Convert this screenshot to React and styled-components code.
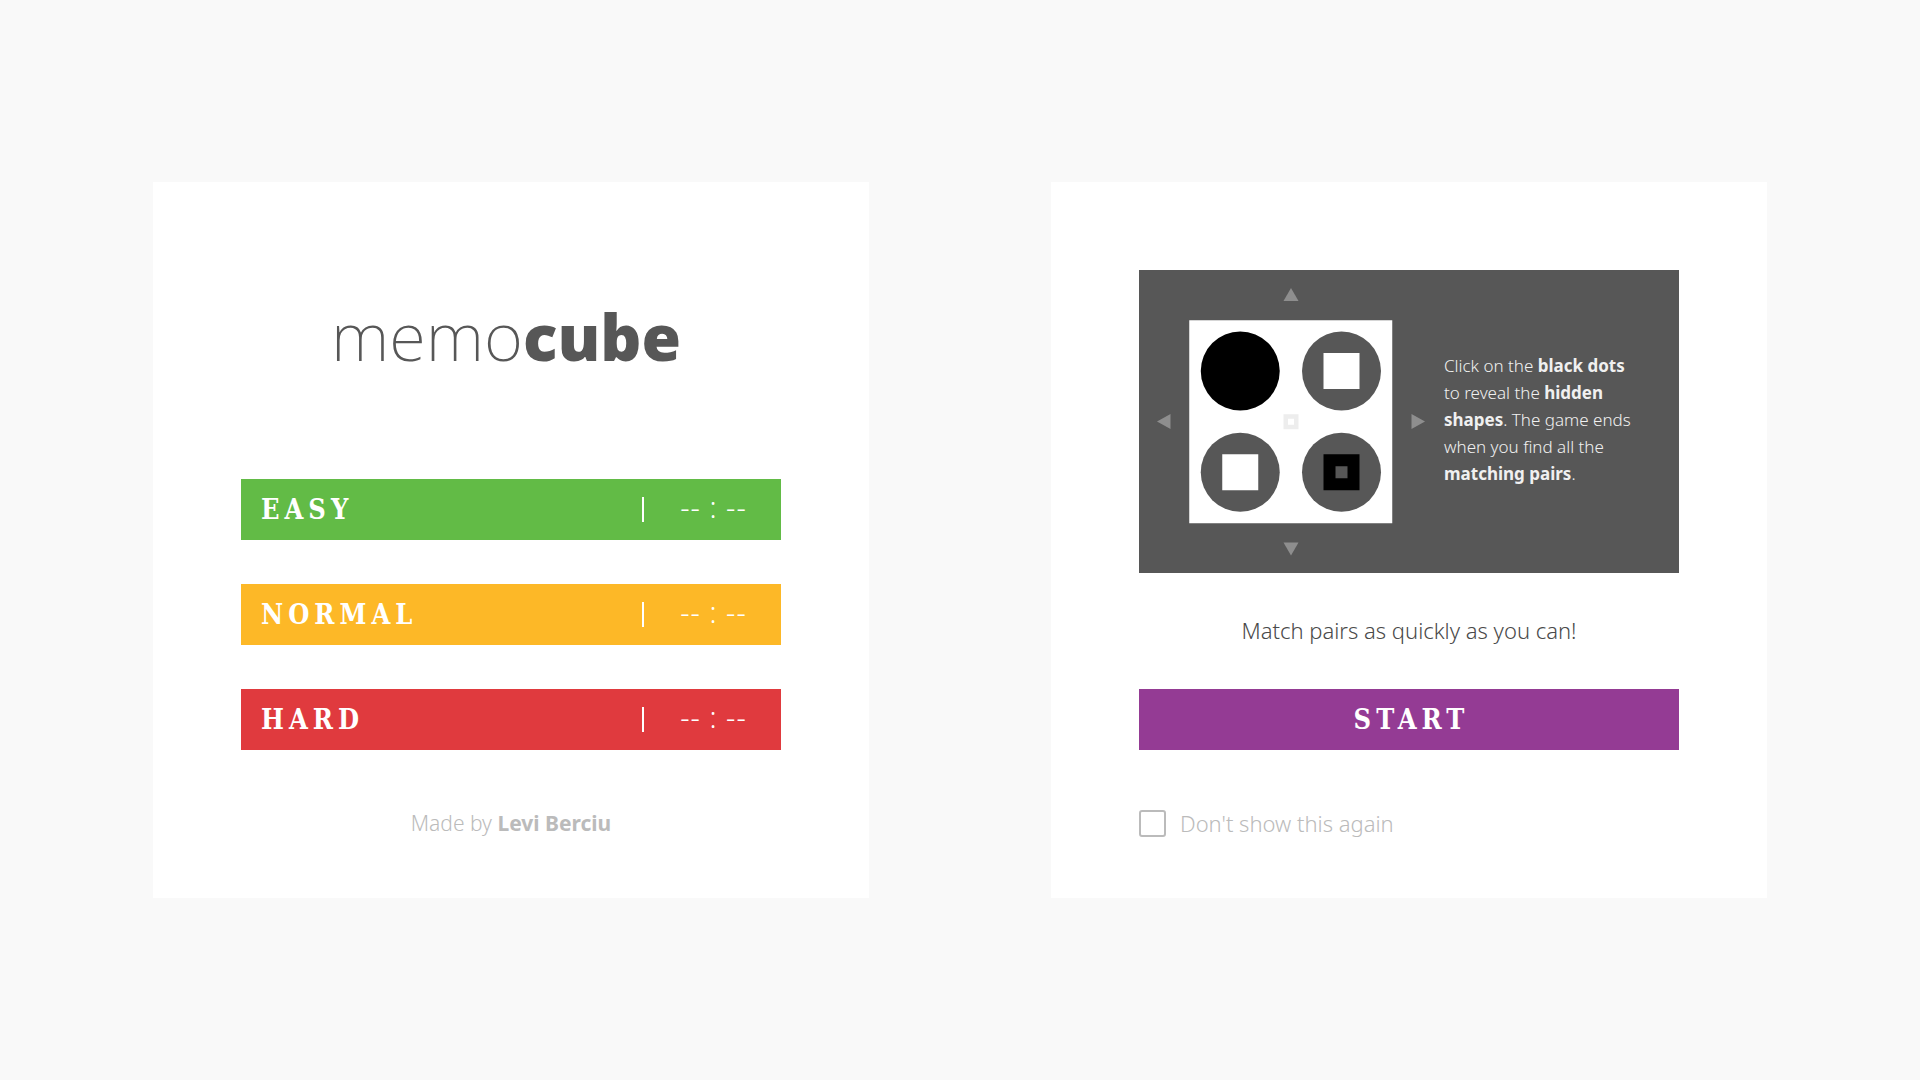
import React from 'react';
import styled, { createGlobalStyle } from 'styled-components';

const sans = '"Noto Sans", "Open Sans", sans-serif';
const slab = '"DejaVu Serif Condensed", "DejaVu Serif", serif';

const GlobalStyle = createGlobalStyle`
  *, *::before, *::after { box-sizing: border-box; }
  body {
    margin: 0;
    background: #f9f9f9;
    color: #575757;
    font-family: ${sans};
    font-weight: 300;
  }
`;

const Page = styled.main`
  min-height: 100vh;
  display: grid;
  grid-template-columns: repeat(2, minmax(0, 716px));
  gap: 182px;
  justify-content: center;
  align-content: center;
`;

const Card = styled.section`
  display: flex;
  flex-direction: column;
  padding: 88px 88px 59px;
  background: #fff;
`;

const Logo = styled.h1`
  margin: 0;
  padding: 20px 10px 99px 0;
  font-size: 67px;
  line-height: 90px;
  font-weight: 200;
  text-align: center;
`;

const LogoStrong = styled.strong`
  font-size: 64px;
  font-weight: 900;
  line-height: 1;
`;

const Levels = styled.div`
  display: flex;
  flex-direction: column;
  gap: 44px;
`;

const Bar = styled.button`
  display: flex;
  align-items: center;
  justify-content: ${(p) => (p.$centered ? 'center' : 'space-between')};
  width: 100%;
  height: 61px;
  padding: ${(p) => (p.$centered ? '0 20px 0 25px' : '0 20px')};
  border: 0;
  border-radius: 0;
  background: ${(p) => p.$color};
  color: #fff;
  font-family: ${slab};
  font-size: 27px;
  font-weight: 700;
  line-height: 32px;
  letter-spacing: 5px;
  cursor: pointer;
`;

const BestTime = styled.span`
  display: flex;
  align-items: center;
  justify-content: center;
  width: 119px;
  height: 25px;
  padding: 0 0 5px 22px;
  border-left: 2px solid #fff;
  font-family: ${sans};
  font-size: 29px;
  font-weight: 300;
  letter-spacing: 1px;
  white-space: pre;
`;

const Note = styled.p`
  margin: 0;
  font-size: 22px;
  line-height: 32px;
  text-align: center;
`;

const Credit = styled(Note)`
  margin-top: 57px;
  color: #bbb;
  font-size: 21px;
`;

const Tagline = styled(Note)`
  margin: 41px 0 43px;
  color: #4a4a4a;
`;

const Strong = styled.strong`
  font-weight: 700;
`;

const Tutorial = styled.div`
  display: flex;
  align-items: center;
  background: #575757;
`;

const Board = styled.svg`
  display: block;
  flex: none;
  width: 303px;
  height: 303px;
`;

const Hint = styled.p`
  flex: 1;
  margin: 0;
  padding: 0 40px 4px 2px;
  color: #f0f0f0;
  font-size: 17px;
  line-height: 27px;
`;

const Option = styled.label`
  display: flex;
  align-items: center;
  align-self: flex-start;
  gap: 14px;
  margin-top: 57px;
  color: #bbb;
  font-size: 22px;
  line-height: 32px;
  cursor: pointer;
`;

const Checkbox = styled.input`
  appearance: none;
  width: 27px;
  height: 27px;
  margin: 0;
  border: 2px solid #bbb;
  border-radius: 3px;
  background: #fff;
  cursor: pointer;

  &:checked {
    background: #bbb;
    box-shadow: inset 0 0 0 4px #fff;
  }
`;

const levels = [
  { name: 'EASY', color: '#62bb46' },
  { name: 'NORMAL', color: '#fdb827' },
  { name: 'HARD', color: '#e03a3e' },
];

function TutorialBoard() {
  return (
    <Board viewBox="0 0 303 303" role="img" aria-label="Cube face with four dots">
      <g fill="#8e8e8e">
        <path d="M152 18 L159.5 31 H144.5 Z" />
        <path d="M152 285.5 L159.5 272.5 H144.5 Z" />
        <path d="M18 151.5 L31.5 144 V159 Z" />
        <path d="M286 151.5 L272.5 144 V159 Z" />
      </g>
      <rect x="50.25" y="50.25" width="203" height="203" fill="#fff" />
      <circle cx="101.25" cy="101" r="39.5" fill="#000" />
      <g fill="#575757">
        <circle cx="202.5" cy="101" r="39.5" />
        <circle cx="101.25" cy="202.25" r="39.5" />
        <circle cx="202.5" cy="202.25" r="39.5" />
      </g>
      <rect x="184.5" y="83" width="36" height="36" fill="#fff" />
      <rect x="83.25" y="184.25" width="36" height="36" fill="#fff" />
      <rect x="184.5" y="184.25" width="36" height="36" fill="#000" />
      <rect x="196.5" y="196.25" width="12" height="12" fill="#575757" />
      <rect x="144.5" y="144.25" width="15" height="15" fill="#ededed" />
      <rect x="149" y="148.75" width="6" height="6" fill="#fff" />
    </Board>
  );
}

export default function App() {
  return (
    <>
      <GlobalStyle />
      <Page>
        <Card>
          <Logo>
            memo<LogoStrong>cube</LogoStrong>
          </Logo>
          <Levels>
            {levels.map((level) => (
              <Bar key={level.name} type="button" $color={level.color}>
                {level.name}
                <BestTime>-- : --</BestTime>
              </Bar>
            ))}
          </Levels>
          <Credit>
            Made by <Strong>Levi Berciu</Strong>
          </Credit>
        </Card>

        <Card>
          <Tutorial>
            <TutorialBoard />
            <Hint>
              Click on the <Strong>black dots</Strong> to reveal the <Strong>hidden</Strong>{' '}
              <Strong>shapes</Strong>. The game ends when you find all the{' '}
              <Strong>matching pairs</Strong>.
            </Hint>
          </Tutorial>
          <Tagline>Match pairs as quickly as you can!</Tagline>
          <Bar type="button" $color="#943b94" $centered>
            START
          </Bar>
          <Option>
            <Checkbox type="checkbox" />
            Don't show this again
          </Option>
        </Card>
      </Page>
    </>
  );
}
